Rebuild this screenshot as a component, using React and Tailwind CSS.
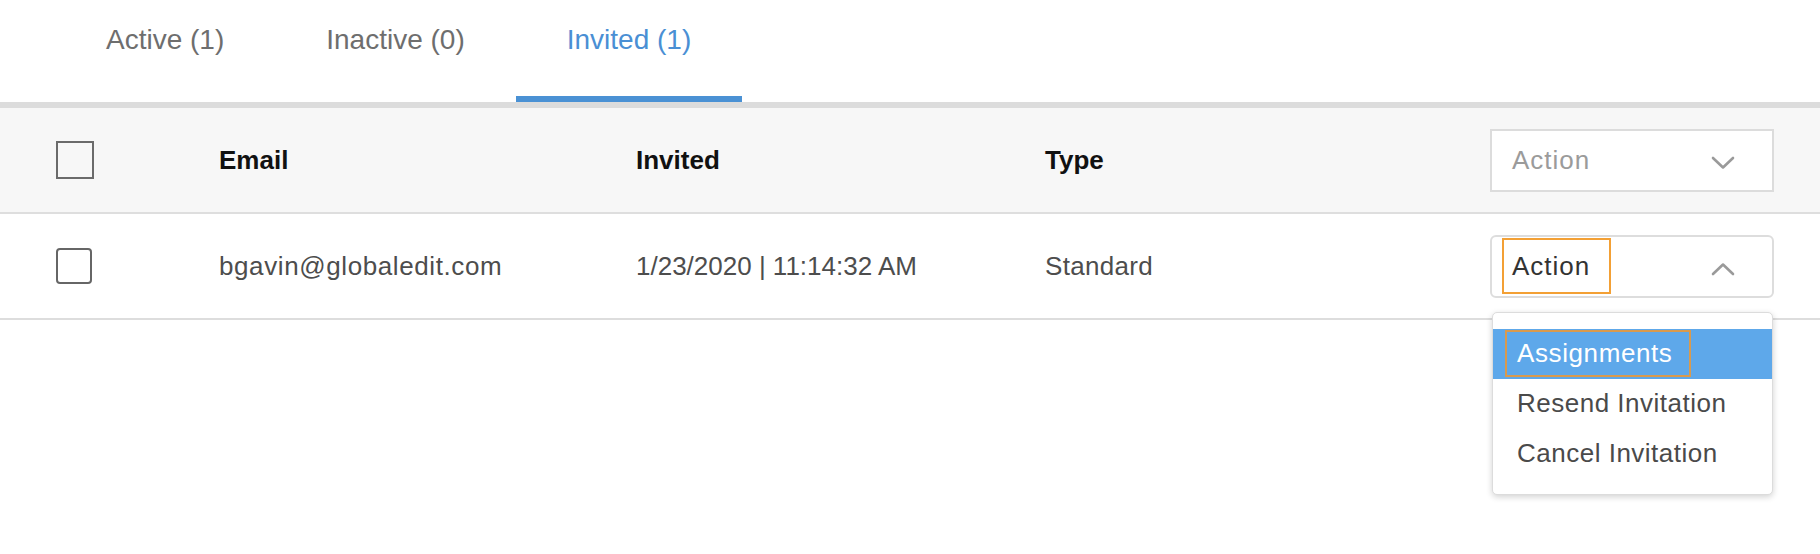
import React from "react";

function Chevron({ up }) {
  return (
    <svg width="24" height="14" viewBox="0 0 24 14" className="mt-[6px] shrink-0" fill="none">
      <polyline
        points={up ? "2,12 12,2.5 22,12" : "2,2 12,11.5 22,2"}
        stroke="#9a9a9a"
        strokeWidth="2.6"
        strokeLinecap="round"
        strokeLinejoin="round"
      />
    </svg>
  );
}

export default function App() {
  const tabs = [
    { label: "Active (1)", active: false },
    { label: "Inactive (0)", active: false },
    { label: "Invited (1)", active: true },
  ];
  return (
    <div className="w-[1820px] h-[554px] bg-white font-['Liberation_Sans',Arial,sans-serif] overflow-hidden">
      {/* Tabs */}
      <div className="flex pl-[55px] h-[102px]">
        {tabs.map((t) => (
          <div
            key={t.label}
            className={
              t.active
                ? "h-full px-[51px] pt-[24px] text-[28px] leading-[32px] border-b-[6px] border-[#4a91d4] text-[#4a8fd4]"
                : "h-full px-[51px] pt-[24px] text-[28px] leading-[32px] border-b-[6px] border-transparent text-[#6e6e6e]"
            }
          >
            {t.label}
          </div>
        ))}
      </div>
      <div className="h-[6px] bg-[#dcdcdc]" />

      {/* Header */}
      <div className="flex items-center h-[106px] bg-[#f7f7f7] border-b-2 border-[#dedede] pl-[56px] pr-[46px]">
        <div className="w-[163px] shrink-0">
          <div className="w-[38px] h-[38px] border-2 border-[#6b6b6b] bg-[#f7f7f7]" />
        </div>
        <div className="w-[417px] shrink-0 text-[26px] font-bold text-[#111]">Email</div>
        <div className="w-[409px] shrink-0 text-[26px] font-bold text-[#111]">Invited</div>
        <div className="flex-1 text-[26px] font-bold text-[#111]">Type</div>
        <div className="w-[284px] shrink-0 h-[63px] border-2 border-[#dcdcdc] bg-white flex items-center justify-between pl-[10px] pr-[37px]">
          <span className="h-[56px] flex items-center border-2 border-transparent pl-[8px] pr-[19px] text-[26px] tracking-[1px] text-[#9b9b9b]">
            Action
          </span>
          <Chevron />
        </div>
      </div>

      {/* Row */}
      <div className="flex items-center h-[106px] bg-white border-b-2 border-[#dddddd] pl-[56px] pr-[46px]">
        <div className="w-[163px] shrink-0">
          <div className="w-[36px] h-[36px] border-2 border-[#666] rounded-[4px] bg-white" />
        </div>
        <div className="w-[417px] shrink-0 text-[26px] tracking-[0.6px] text-[#4d4d4d]">bgavin@globaledit.com</div>
        <div className="w-[409px] shrink-0 text-[26px] text-[#4d4d4d]">1/23/2020 | 11:14:32 AM</div>
        <div className="flex-1 text-[26px] tracking-[0.3px] text-[#4d4d4d]">Standard</div>
        <div className="w-[284px] shrink-0 relative">
          <div className="h-[63px] border-2 border-[#dddddd] rounded-[6px] bg-white flex items-center justify-between pl-[10px] pr-[37px]">
            <span className="h-[56px] flex items-center border-2 border-[#f3a035] pl-[8px] pr-[19px] text-[26px] tracking-[1px] text-[#333]">
              Action
            </span>
            <Chevron up />
          </div>
          {/* Dropdown menu */}
          <div className="absolute left-[2px] top-[77px] w-[281px] bg-white border border-[#dcdcdc] rounded-[5px] shadow-[0_2px_6px_rgba(0,0,0,0.18)] pt-[16px] pb-[15px] z-10">
            <div className="h-[50px] bg-[#5ea8ea] flex items-center pl-[12px]">
              <span className="h-[47px] flex items-center border-2 border-[#d99a4e] pl-[10px] pr-[17px] text-[26px] tracking-[0.6px] text-white">
                Assignments
              </span>
            </div>
            <div className="h-[50px] flex items-center pl-[12px]">
              <span className="h-[47px] flex items-center border-2 border-transparent pl-[10px] text-[26px] tracking-[0.5px] text-[#4a4a4a]">
                Resend Invitation
              </span>
            </div>
            <div className="h-[50px] flex items-center pl-[12px]">
              <span className="h-[47px] flex items-center border-2 border-transparent pl-[10px] text-[26px] tracking-[0.5px] text-[#4a4a4a]">
                Cancel Invitation
              </span>
            </div>
          </div>
        </div>
      </div>
    </div>
  );
}
